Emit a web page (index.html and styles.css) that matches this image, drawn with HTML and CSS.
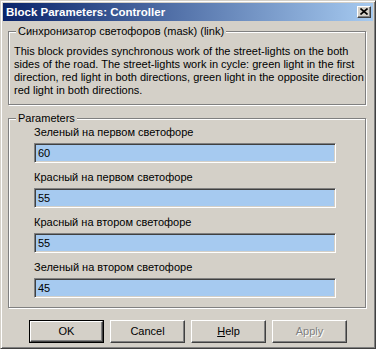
FILE: index.html
```html
<!DOCTYPE html>
<html>
<head>
<meta charset="utf-8">
<link rel="stylesheet" href="styles.css">
</head>
<body>
<div class="window">
  <div class="titlebar">
    <span class="title">Block Parameters: Controller</span>
    <span class="close"><svg width="8" height="7" viewBox="0 0 8 7"><path d="M0.5 0.5 L7.5 6.5 M7.5 0.5 L0.5 6.5" stroke="#000" stroke-width="1.6" fill="none"/></svg></span>
  </div>
  <div class="content">
    <div class="group desc">
      <span class="legend">Синхронизатор светофоров (mask) (link)</span>
      <p class="text">This block provides synchronous work of the street-lights on the both<br>sides of the road. The street-lights work in cycle: green light in the first<br>direction, red light in both directions, green light in the opposite direction<br>red light in both directions.</p>
    </div>
    <div class="group params">
      <span class="legend">Parameters</span>
      <div class="param">
        <div class="label">Зеленый на первом светофоре</div>
        <div class="field">60</div>
      </div>
      <div class="param">
        <div class="label">Красный на первом светофоре</div>
        <div class="field">55</div>
      </div>
      <div class="param">
        <div class="label">Красный на втором светофоре</div>
        <div class="field">55</div>
      </div>
      <div class="param">
        <div class="label">Зеленый на втором светофоре</div>
        <div class="field">45</div>
      </div>
    </div>
    <div class="buttons">
      <div class="btn default"><span class="face">OK</span></div>
      <div class="btn"><span class="face">Cancel</span></div>
      <div class="btn"><span class="face"><u>H</u>elp</span></div>
      <div class="btn disabled"><span class="face">Apply</span></div>
    </div>
  </div>
</div>
</body>
</html>
```
FILE: styles.css
```css
* { box-sizing: border-box; }
html, body { margin: 0; padding: 0; background: #D4D0C8; }
body {
  font-family: "Liberation Sans", Arial, sans-serif;
  font-size: 11px;
  color: #000;
}
.window {
  width: 376px;
  height: 349px;
  background: #D4D0C8;
  border: 1px solid;
  border-color: #D4D0C8 #404040 #404040 #D4D0C8;
  box-shadow: inset 1px 1px 0 #fff, inset -1px -1px 0 #808080;
  padding: 2px;
  display: flex;
  flex-direction: column;
}
.titlebar {
  height: 18px;
  flex: none;
  background: linear-gradient(to right, #0A246A, #A6CAF0);
  display: flex;
  align-items: center;
  padding-left: 3px;
  padding-right: 2px;
}
.title {
  flex: 1;
  color: #fff;
  font-weight: bold;
  font-size: 11.5px;
  line-height: 14px;
  white-space: nowrap;
}
.close {
  width: 14px;
  height: 12px;
  background: #D4D0C8;
  border: 1px solid;
  border-color: #fff #404040 #404040 #fff;
  box-shadow: inset -1px -1px 0 #808080;
  display: flex;
  align-items: center;
  justify-content: center;
  padding-right: 1px;
  padding-bottom: 1px;
}
.close svg { display: block; }
.content {
  flex: 1;
  padding: 0 7px 0 5px;
  display: flex;
  flex-direction: column;
}
.group {
  position: relative;
  border: 1px solid #808080;
  box-shadow: inset 1px 1px 0 #fff, 1px 1px 0 #fff;
}
.legend {
  position: absolute;
  top: -7px;
  left: 7px;
  padding: 0 2px;
  background: #D4D0C8;
  line-height: 13px;
  white-space: nowrap;
}
.desc {
  margin-top: 10px;
  padding: 13px 4px 7px 5px;
}
.text {
  margin: 0;
  line-height: 13px;
  white-space: nowrap;
}
.params {
  margin-top: 13px;
  padding: 7px 0 9px 25px;
  display: flex;
  flex-direction: column;
  gap: 8px;
}
.label {
  line-height: 13px;
  margin-bottom: 4px;
  white-space: nowrap;
}
.field {
  width: 302px;
  height: 20px;
  background: #A6CAF0;
  border: 1px solid;
  border-color: #808080 #fff #fff #808080;
  box-shadow: inset 1px 1px 0 #404040, inset -1px -1px 0 #D4D0C8;
  padding: 0 3px;
  line-height: 18px;
}
.buttons {
  margin-top: 12px;
  padding-left: 21px;
  display: flex;
  gap: 6px;
}
.btn {
  width: 75px;
  height: 23px;
  background: #D4D0C8;
  border: 1px solid;
  border-color: #fff #404040 #404040 #fff;
  box-shadow: inset -1px -1px 0 #808080;
  display: flex;
}
.btn .face {
  flex: 1;
  display: flex;
  align-items: center;
  justify-content: center;
  padding-bottom: 1px;
}
.btn.default {
  border: 1px solid #000;
  box-shadow: none;
}
.btn.default .face {
  border: 1px solid;
  border-color: #fff #404040 #404040 #fff;
  box-shadow: inset -1px -1px 0 #808080;
}
.btn.disabled .face {
  color: #808080;
  text-shadow: 1px 1px 0 #fff;
}
```
